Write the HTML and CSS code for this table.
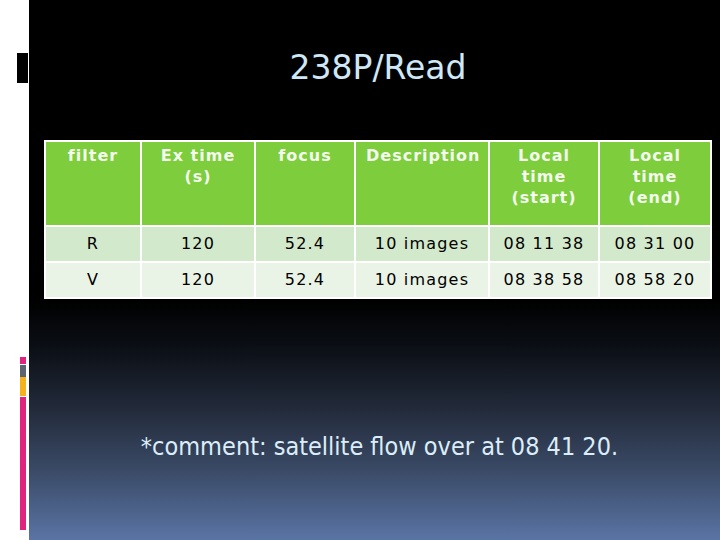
FILE: index.html
```html
<!DOCTYPE html>
<html>
<head>
<meta charset="utf-8">
<link rel="stylesheet" href="styles.css">
</head>
<body>
<div class="page">
  <div class="strip">
    <div class="mark"></div>
    <div class="bars">
      <div class="bar pink1"></div>
      <div class="bar gray"></div>
      <div class="bar yellow"></div>
      <div class="bar pink2"></div>
    </div>
  </div>
  <div class="slide">
    <h1 class="title">238P/Read</h1>
    <table class="data">
      <colgroup>
        <col style="width:96px"><col style="width:114px"><col style="width:100px"><col style="width:134px"><col style="width:110px"><col style="width:112px">
      </colgroup>
      <thead>
        <tr><th>filter</th><th>Ex time (s)</th><th>focus</th><th>Description</th><th>Local time (start)</th><th>Local time (end)</th></tr>
      </thead>
      <tbody>
        <tr class="r1"><td>R</td><td>120</td><td>52.4</td><td>10 images</td><td>08 11 38</td><td>08 31 00</td></tr>
        <tr class="r2"><td>V</td><td>120</td><td>52.4</td><td>10 images</td><td>08 38 58</td><td>08 58 20</td></tr>
      </tbody>
    </table>
    <p class="comment">*comment: satellite flow over at 08 41 20.</p>
  </div>
</div>
</body>
</html>
```
FILE: styles.css
```css
html, body { margin: 0; padding: 0; }
body { width: 720px; height: 540px; overflow: hidden; background: #fff; }
.page { display: flex; width: 720px; height: 540px; }
.strip { width: 29px; flex: none; background: #fff; display: flex; flex-direction: column; }
.mark { margin: 53px 0 0 17px; width: 11px; height: 30px; background: #000; }
.bars { margin: 274px 0 0 20px; width: 6px; display: flex; flex-direction: column; }
.bar { width: 6px; }
.pink1 { height: 7px; background: #e0237c; }
.gray { height: 12px; margin-top: 1px; background: #5c6470; }
.yellow { height: 19px; background: #f6b21c; }
.pink2 { height: 133px; margin-top: 1px; background: #e0237c; }
.slide {
  flex: 1; height: 540px; box-sizing: border-box;
  background: linear-gradient(to bottom, #000 0px, #000 300px, #0c1017 350px, #232b3b 410px, #3a4a66 470px, #5a74a5 540px);
  padding-top: 45px;
}
.title {
  margin: 0; text-align: center; padding-left: 7px;
  font-family: "DejaVu Sans", Verdana, sans-serif; font-weight: normal;
  font-size: 33px; line-height: 46px; color: #cfe7f6;
}
.data {
  margin: 49px 0 0 15px; border-collapse: collapse; table-layout: fixed; width: 666px;
  font-family: "DejaVu Sans", Verdana, sans-serif; font-size: 16px;
}
.data th, .data td { border: 2px solid #fff; text-align: center; }
.data th {
  background: #7dcd3c; color: #f4faee; font-weight: bold; vertical-align: top;
  height: 85px; padding: 3px 10px 0; line-height: 21px; box-sizing: border-box;
  letter-spacing: 1px;
}
.data td { color: #000; height: 36px; padding: 0; line-height: 20px; box-sizing: border-box; letter-spacing: 1.2px; }
.r1 td { background: #d3e9cb; }
.r2 td { background: #eaf4e6; }
.comment {
  margin: 133px 0 0 0; text-align: center; padding-left: 10px;
  font-family: "DejaVu Sans Condensed", "DejaVu Sans", sans-serif; font-size: 25px;
  color: #dcedf9; line-height: 30px;
}
```
